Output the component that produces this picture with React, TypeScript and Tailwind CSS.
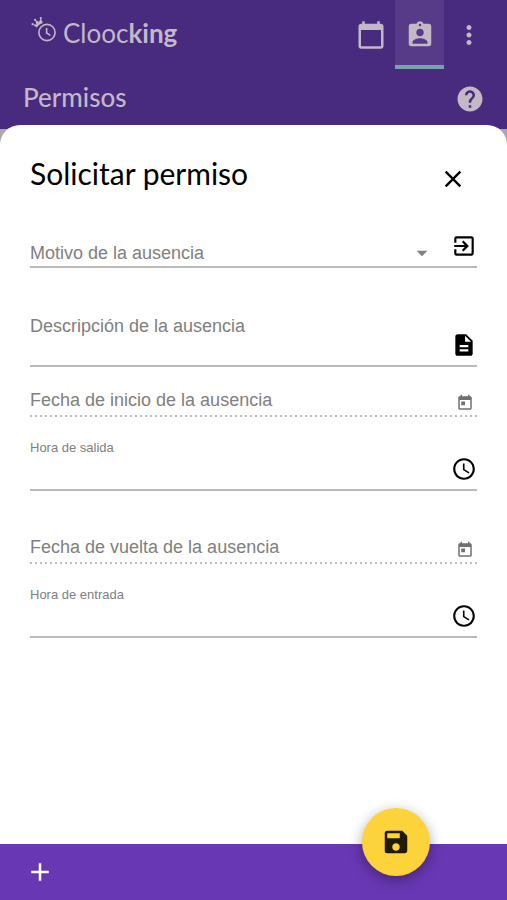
// src/pages/RequestLeave.tsx
import React from "react";
import {
  MdAccessTime,
  MdAdd,
  MdArrowDropDown,
  MdAssignmentInd,
  MdCalendarToday,
  MdClose,
  MdDescription,
  MdExitToApp,
  MdHelp,
  MdMoreVert,
  MdSave,
} from "react-icons/md";

type FieldProps = {
  id: string;
  label: string;
  className?: string;
};

const Logo: React.FC = () => (
  <a href="#" className="flex items-center gap-1.5 text-[#c2b8c6]">
    <svg width="26" height="28" viewBox="0 0 26 28" className="mb-3" fill="none" aria-hidden="true">
      {/* clock */}
      <circle cx="16" cy="17.5" r="8.1" stroke="currentColor" strokeWidth="1.6" />
      <path d="M15.6 13v5l3.8 2.4" stroke="currentColor" strokeWidth="1.6" />
      {/* crown */}
      <path d="M5.6 12.6 1.4 9.2 5.4 9.4 4 4.6 8 7 9.8 2.8 11.8 8Q7.8 9.2 5.6 12.6Z" fill="currentColor" />
      <circle cx="1.6" cy="9.2" r="1.1" fill="currentColor" />
      <circle cx="4" cy="4.8" r="1.1" fill="currentColor" />
      <circle cx="9.8" cy="3" r="1.1" fill="currentColor" />
    </svg>
    <span className="pb-1 text-[26px] leading-8 font-normal">
      Clooc<span className="font-bold">king</span>
    </span>
  </a>
);

const TodayIcon: React.FC = () => (
  <svg viewBox="0 0 24 24" className="mr-[3px] mb-px size-[18px] text-[#707070]" fill="currentColor" aria-hidden="true">
    <path d="M19 3h-1V1h-2v2H8V1H6v2H5c-1.11 0-1.99.9-1.99 2L3 19c0 1.1.89 2 2 2h14c1.1 0 2-.9 2-2V5c0-1.1-.9-2-2-2zm0 16H5V8h14v11zM7 10h5v5H7z" />
  </svg>
);

const DateField: React.FC<FieldProps> = ({ id, label, className }) => (
  <div className={className}>
    <div className="flex items-end pb-0.5">
      <label htmlFor={id} className="mb-[3px] text-lg leading-5">{label}</label>
      <input id={id} type="text" className="h-5 min-w-0 flex-1 outline-none" />
      <TodayIcon />
    </div>
    {/* dotted underline */}
    <div className="h-0.5 bg-[linear-gradient(to_right,#bdbdbd_2px,transparent_2px)] bg-[length:5px_2px]"></div>
  </div>
);

const TimeField: React.FC<FieldProps> = ({ id, label, className }) => (
  <div className={`flex items-end border-b-2 border-[#b9b9b9] ${className}`}>
    <div className="flex min-w-0 flex-1 flex-col">
      <label htmlFor={id} className="text-[13px] leading-[18px]">{label}</label>
      <input id={id} type="text" className="h-8 w-full text-lg outline-none" />
    </div>
    <MdAccessTime className="mb-[7px] size-[26px] text-black" />
  </div>
);

const App: React.FC = () => {
  return (
    <div className="flex min-h-screen flex-col bg-[#aaa8ac] font-['Liberation_Sans',sans-serif]">
      <header className="bg-[#482a7f] font-['Lato',sans-serif] text-[#c2b8c6]">
        <div className="flex h-[69px] items-center justify-between pr-[14px] pl-[31px]">
          <Logo />
          <nav className="flex self-stretch">
            <button type="button" aria-label="Calendario" className="flex w-[49px] items-center justify-center">
              <MdCalendarToday className="size-[30px]" />
            </button>
            <button type="button" aria-label="Permisos" className="flex w-[49px] items-center justify-center bg-[#573b89] shadow-[inset_0_-4px_0_#78a3ad]">
              <MdAssignmentInd className="size-[30px]" />
            </button>
            <button type="button" aria-label="Más" className="flex w-[49px] items-center justify-center">
              <MdMoreVert className="size-[30px]" />
            </button>
          </nav>
        </div>
        <div className="flex h-[60px] items-center justify-between pr-[22px] pl-[23px]">
          <h1 className="pb-1 text-[26px] leading-8 font-medium">Permisos</h1>
          <button type="button" aria-label="Ayuda">
            <MdHelp className="size-[30px]" />
          </button>
        </div>
      </header>

      {/* Sheet */}
      <main className="-mt-1 flex-1 rounded-t-[20px] bg-white px-[30px] pt-8 pb-16 text-[#808080]">
        <div className="flex items-end justify-between pr-[10px] text-black">
          <h2 className="pb-1 font-['Lato',sans-serif] text-3xl leading-8">Solicitar permiso</h2>
          <button type="button" aria-label="Cerrar">
            <MdClose className="size-7" />
          </button>
        </div>

        <form id="leave-form">
          <div className="mt-10 flex items-end border-b-2 border-[#b9b9b9]">
            <label htmlFor="reason" className="mb-[3px] text-lg leading-5">Motivo de la ausencia</label>
            <select id="reason" className="h-6 min-w-0 flex-1 appearance-none outline-none">
              <option value=""></option>
            </select>
            <MdArrowDropDown className="mr-4 size-[26px]" />
            <MdExitToApp className="mb-[7px] size-[26px] text-black" />
          </div>

          <div className="mt-12 flex items-end border-b-2 border-[#b9b9b9]">
            <div className="flex min-w-0 flex-1 flex-col">
              <label htmlFor="description" className="text-lg leading-5">Descripción de la ausencia</label>
              <textarea id="description" rows={1} className="h-[29px] w-full resize-none text-lg outline-none"></textarea>
            </div>
            <MdDescription className="mb-[7px] size-[26px] text-black" />
          </div>

          <DateField id="start-date" label="Fecha de inicio de la ausencia" className="mt-[23px]" />
          <TimeField id="leave-time" label="Hora de salida" className="mt-[22px]" />
          <DateField id="return-date" label="Fecha de vuelta de la ausencia" className="mt-[46px]" />
          <TimeField id="entry-time" label="Hora de entrada" className="mt-[22px]" />
        </form>
      </main>

      <footer className="relative flex h-14 items-center bg-[#6838b4] px-[25px] text-white">
        <button type="button" aria-label="Añadir">
          <MdAdd className="size-[30px]" />
        </button>
        <button
          type="submit"
          form="leave-form"
          aria-label="Guardar"
          className="absolute -top-9 right-[77px] flex size-[68px] items-center justify-center rounded-full bg-[#fdd33c] text-[#211a05] shadow-[0_4px_14px_rgba(0,0,0,0.35)]"
        >
          <MdSave className="size-[30px]" />
        </button>
      </footer>
    </div>
  );
};

export default App;
